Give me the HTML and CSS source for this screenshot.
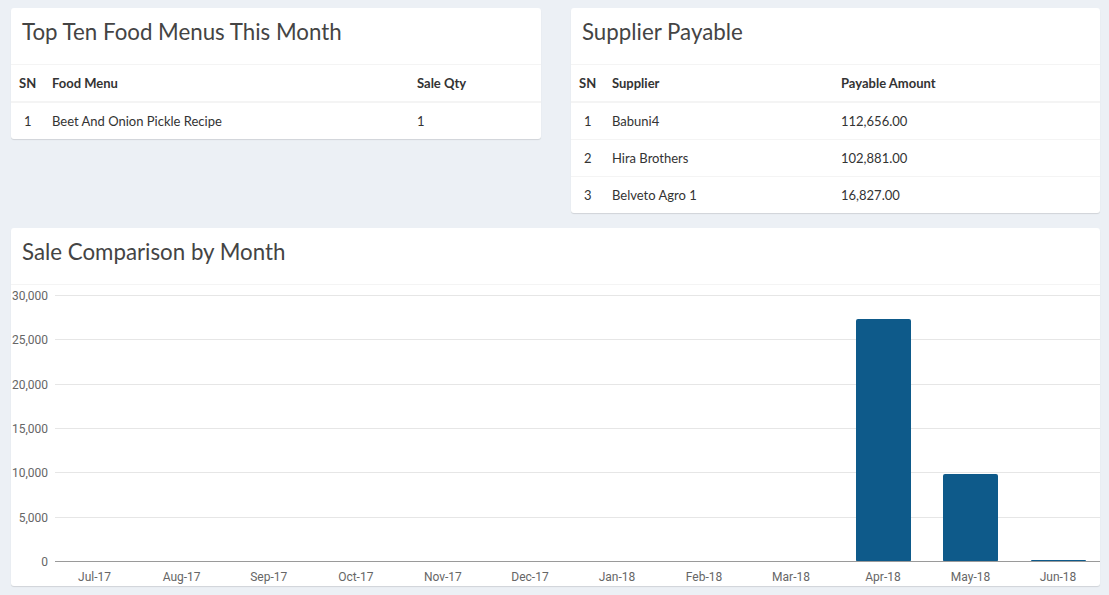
FILE: index.html
```html
<!DOCTYPE html>
<html>
<head>
<meta charset="utf-8">
<link rel="stylesheet" href="styles.css">
</head>
<body>
<div class="page">
  <div class="top-row">
    <section class="box">
      <header class="box-header"><h3 class="box-title">Top Ten Food Menus This Month</h3></header>
      <table class="tbl">
        <colgroup><col class="c-sn"><col class="c-food"><col></colgroup>
        <thead><tr><th>SN</th><th>Food Menu</th><th>Sale Qty</th></tr></thead>
        <tbody>
          <tr><td class="sn">1</td><td>Beet And Onion Pickle Recipe</td><td>1</td></tr>
        </tbody>
      </table>
    </section>
    <section class="box">
      <header class="box-header"><h3 class="box-title">Supplier Payable</h3></header>
      <table class="tbl">
        <colgroup><col class="c-sn"><col class="c-sup"><col></colgroup>
        <thead><tr><th>SN</th><th>Supplier</th><th>Payable Amount</th></tr></thead>
        <tbody>
          <tr><td class="sn">1</td><td>Babuni4</td><td>112,656.00</td></tr>
          <tr><td class="sn">2</td><td>Hira Brothers</td><td>102,881.00</td></tr>
          <tr><td class="sn">3</td><td>Belveto Agro 1</td><td>16,827.00</td></tr>
        </tbody>
      </table>
    </section>
  </div>
  <section class="box chart-box">
    <header class="box-header"><h3 class="box-title">Sale Comparison by Month</h3></header>
    <div class="chart">
      <svg class="chart-svg" width="1089" height="301" viewBox="0 0 1089 301">
        <g class="grid">
          <line x1="44" x2="1089" y1="10.5" y2="10.5"/>
          <line x1="44" x2="1089" y1="54.5" y2="54.5"/>
          <line x1="44" x2="1089" y1="99.5" y2="99.5"/>
          <line x1="44" x2="1089" y1="143.5" y2="143.5"/>
          <line x1="44" x2="1089" y1="187.5" y2="187.5"/>
          <line x1="44" x2="1089" y1="232.5" y2="232.5"/>
        </g>
        <g class="ylabels">
          <text x="37" y="14.5">30,000</text>
          <text x="37" y="58.5">25,000</text>
          <text x="37" y="103.5">20,000</text>
          <text x="37" y="147.5">15,000</text>
          <text x="37" y="191.5">10,000</text>
          <text x="37" y="236.5">5,000</text>
          <text x="37" y="280.5">0</text>
        </g>
        <g class="bars">
          <rect x="845" y="34" width="55" height="243" rx="2"/>
          <rect x="932" y="189" width="55" height="88" rx="2"/>
          <rect x="1020" y="275" width="55" height="2" rx="1"/>
        </g>
        <line class="axis" x1="44" x2="1089" y1="276.5" y2="276.5"/>
        <g class="xlabels">
          <text x="83.5" y="296">Jul-17</text>
          <text x="170.6" y="296">Aug-17</text>
          <text x="257.7" y="296">Sep-17</text>
          <text x="344.8" y="296">Oct-17</text>
          <text x="431.9" y="296">Nov-17</text>
          <text x="519" y="296">Dec-17</text>
          <text x="606" y="296">Jan-18</text>
          <text x="693" y="296">Feb-18</text>
          <text x="780" y="296">Mar-18</text>
          <text x="872" y="296">Apr-18</text>
          <text x="959.5" y="296">May-18</text>
          <text x="1047" y="296">Jun-18</text>
        </g>
      </svg>
    </div>
  </section>
</div>
</body>
</html>
```

FILE: styles.css
```css
* { box-sizing: border-box; }
html, body { margin: 0; padding: 0; }
body {
  background: #ecf0f5;
  font-family: "Lato", "Open Sans", sans-serif;
  color: #333;
  width: 1109px;
  height: 595px;
  overflow: hidden;
}
.page {
  padding: 8px 9px 0 11px;
}
.top-row {
  display: grid;
  grid-template-columns: 530px 529px;
  column-gap: 30px;
  align-items: start;
}
.box {
  background: #fff;
  border-radius: 3px;
  box-shadow: 0 1px 1px rgba(0,0,0,0.12);
}
.box-header {
  height: 57px;
  padding: 10px 11px 0;
  border-bottom: 1px solid #f4f4f4;
}
.box-title {
  margin: 0;
  font-weight: 400;
  font-size: 22.3px;
  line-height: 28px;
  color: #444;
}
.tbl {
  width: 100%;
  border-collapse: collapse;
  table-layout: fixed;
  font-size: 13px;
}
.c-sn { width: 33px; }
.c-food { width: 365px; }
.c-sup { width: 229px; }
.tbl th {
  text-align: left;
  font-weight: 700;
  height: 37px;
  padding: 0 8px;
  border-bottom: 2px solid #f4f4f4;
  vertical-align: middle;
}
.tbl td {
  height: 37px;
  padding: 0 8px;
  border-top: 1px solid #f4f4f4;
  vertical-align: middle;
}
.tbl tbody tr:first-child td { border-top: none; height: 37px; }
.tbl td.sn { padding-left: 13px; }
.chart-box {
  margin-top: 15px;
  width: 1089px;
}
.chart { height: 301px; }
.chart-svg { display: block; }
.grid line { stroke: #e6e6e6; stroke-width: 1; }
.axis { stroke: #9a9a9a; stroke-width: 1; }
.bars rect { fill: #0e5a8a; }
.ylabels text {
  font-family: "Roboto", "Liberation Sans", sans-serif;
  font-size: 12px;
  fill: #666;
  text-anchor: end;
}
.xlabels text {
  font-family: "Roboto", "Liberation Sans", sans-serif;
  font-size: 12px;
  fill: #666;
  text-anchor: middle;
}
```
